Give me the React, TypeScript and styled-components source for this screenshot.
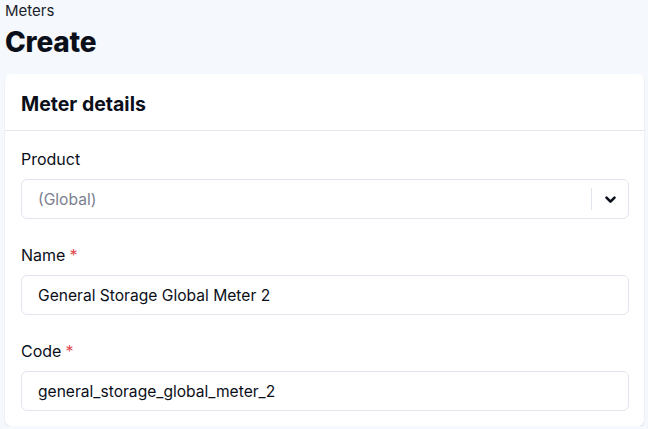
import styled, { createGlobalStyle } from 'styled-components';

const GlobalStyle = createGlobalStyle`
    html, body {
        margin: 0;
        padding: 0;
        background: #f5f8fc;
        font-family: Inter, "Noto Sans", sans-serif;
        color: #0b0f1a;
    }
`

const Page = styled.main`
    padding: 0 4px 0 5px;
`
const Breadcrumb = styled.div`
    font-size: 15px;
    line-height: 20px;
    padding-top: 1px;
    color: #1a1f2b;
`
const Title = styled.h1`
    margin: 0;
    padding-top: 3px;
    font-size: 28px;
    font-weight: 800;
    line-height: 36px;
    letter-spacing: -0.2px;
`
const Card = styled.section`
    margin-top: 14px;
    background: #ffffff;
    border-radius: 6px;
    box-shadow: 0 1px 2px rgba(15, 23, 42, 0.12);
    padding-bottom: 15px;
`
const CardHeader = styled.header`
    height: 53px;
    padding: 3px 16px 0;
    display: flex;
    align-items: center;
    border-bottom: 1px solid #e2e7ef;
`
const CardTitle = styled.h2`
    margin: 0;
    font-size: 19.5px;
    font-weight: 700;
`
const CardBody = styled.div`
    display: flex;
    flex-direction: column;
    gap: 25px;
    padding: 17px 15px 0 16px;
`
const Field = styled.div`
    display: flex;
    flex-direction: column;
    gap: 9px;
`
const Label = styled.label`
    font-size: 16px;
    line-height: 22px;
    color: #0b0f1a;
`
const Required = styled.span`
    color: #e5484d;
    margin-left: 4px;
`
const InputBox = styled.div<{ $muted?: boolean }>`
    display: flex;
    align-items: center;
    height: 38px;
    border: 1px solid #e1e6ee;
    border-radius: 6px;
    background: #fff;
    padding-left: 16px;
    font-size: 15.6px;
    color: ${p => (p.$muted ? '#7b8190' : '#0b0f1a')};
`
const Value = styled.span`
    flex: 1;
`
const SelectButton = styled.div`
    display: flex;
    align-items: center;
    justify-content: center;
    width: 36px;
    height: 22px;
    border-left: 1px solid #e1e6ee;
`

const Chevron = () => (
    <svg width="13" height="13" viewBox="0 0 12 12">
        <path d="M2.3 4.3 L6 8 L9.7 4.3" fill="none" stroke="#0b0f1a" strokeWidth="2.4" strokeLinecap="round" strokeLinejoin="round" />
    </svg>
)

const App = () => {
    return (
        <Page>
            <GlobalStyle />
            <Breadcrumb>Meters</Breadcrumb>
            <Title>Create</Title>
            <Card>
                <CardHeader>
                    <CardTitle>Meter details</CardTitle>
                </CardHeader>
                <CardBody>
                    <Field>
                        <Label>Product</Label>
                        <InputBox $muted>
                            <Value>(Global)</Value>
                            <SelectButton><Chevron /></SelectButton>
                        </InputBox>
                    </Field>
                    <Field>
                        <Label>Name<Required>*</Required></Label>
                        <InputBox><Value>General Storage Global Meter 2</Value></InputBox>
                    </Field>
                    <Field>
                        <Label>Code<Required>*</Required></Label>
                        <InputBox><Value>general_storage_global_meter_2</Value></InputBox>
                    </Field>
                </CardBody>
            </Card>
        </Page>
    );
};

export default App;
